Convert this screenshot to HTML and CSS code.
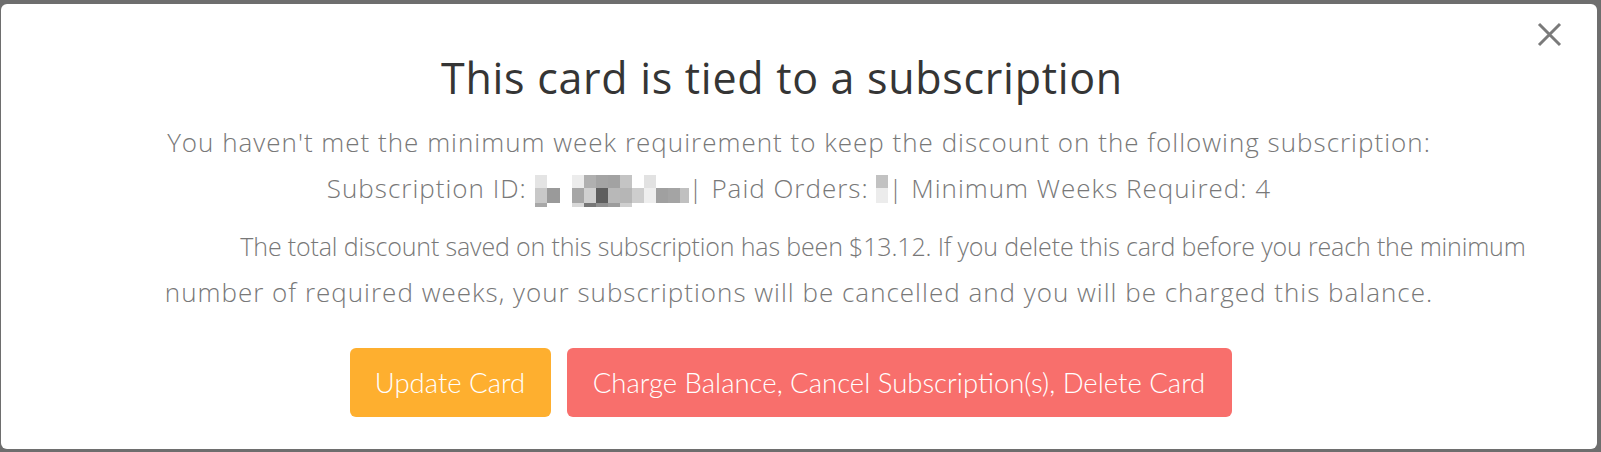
FILE: index.html
```html
<!DOCTYPE html>
<html lang="en">
<head>
<meta charset="utf-8">
<title>This card is tied to a subscription</title>
<link rel="stylesheet" href="styles.css">
</head>
<body>
<div class="backdrop">
  <div class="modal">
    <button class="close" aria-label="Close">
      <svg width="25" height="25" viewBox="0 0 25 25"><path d="M2 2 L23 23 M23 2 L2 23" stroke="#7a7a7a" stroke-width="3" fill="none"/></svg>
    </button>
    <h1 class="title">This card is tied to a subscription</h1>
    <p class="intro">You haven't met the minimum week requirement to keep the discount on the following subscription:<br>
      Subscription ID: <svg class="mosaic mosaic-id" width="154" height="32" viewBox="0 0 154 32"><rect x="0" y="0" width="12" height="13" fill="#e4e4e4"/><rect x="0" y="13" width="12" height="15" fill="#c8c8c8"/><rect x="0" y="28" width="12" height="4" fill="#a8a8a8"/><rect x="12" y="13" width="13" height="15" fill="#9a9a9a"/><rect x="37" y="0" width="12" height="13" fill="#ececec"/><rect x="37" y="13" width="12" height="15" fill="#a6a6a6"/><rect x="37" y="28" width="12" height="4" fill="#d8d8d8"/><rect x="49" y="0" width="12" height="13" fill="#b0b0b0"/><rect x="49" y="13" width="12" height="15" fill="#d0d0d0"/><rect x="49" y="28" width="12" height="4" fill="#777"/><rect x="61" y="0" width="12" height="13" fill="#a4a4a4"/><rect x="61" y="13" width="12" height="15" fill="#5e5e5e"/><rect x="61" y="28" width="12" height="4" fill="#909090"/><rect x="73" y="0" width="12" height="13" fill="#a2a2a2"/><rect x="73" y="13" width="12" height="15" fill="#b8b8b8"/><rect x="73" y="28" width="12" height="4" fill="#9c9c9c"/><rect x="85" y="0" width="12" height="13" fill="#c4c4c4"/><rect x="85" y="13" width="12" height="15" fill="#b6b6b6"/><rect x="85" y="28" width="12" height="4" fill="#cfcfcf"/><rect x="97" y="13" width="12" height="15" fill="#cdcdcd"/><rect x="109" y="0" width="12" height="13" fill="#e2e2e2"/><rect x="109" y="13" width="12" height="15" fill="#eeeeee"/><rect x="121" y="13" width="12" height="15" fill="#a0a0a0"/><rect x="133" y="13" width="12" height="15" fill="#a4a4a4"/><rect x="145" y="13" width="9" height="15" fill="#c0c0c0"/></svg>| Paid Orders: <svg class="mosaic mosaic-po" width="12" height="32" viewBox="0 0 12 32"><rect x="0" y="0" width="12" height="13" fill="#c2c2c2"/><rect x="0" y="13" width="12" height="15" fill="#ececec"/></svg>| Minimum Weeks Required: 4</p>
    <p class="detail"><span class="detail-lead">The total discount saved on this subscription has been $13.12. If you delete this card before you reach the minimum</span><br>number of required weeks, your subscriptions will be cancelled and you will be charged this balance.</p>
    <div class="actions">
      <button class="btn btn-update">Update Card</button>
      <button class="btn btn-delete">Charge Balance, Cancel Subscription(s), Delete Card</button>
    </div>
  </div>
</div>
</body>
</html>
```

FILE: styles.css
```css
* { box-sizing: border-box; }
html, body { margin: 0; padding: 0; }
body {
  background: #6e6e6e;
  font-family: "Open Sans", Lato, sans-serif;
  width: 1601px;
  height: 452px;
  overflow: hidden;
}
.backdrop {
  padding: 4px 4px 3px 1px;
  height: 452px;
}
.modal {
  position: relative;
  background: #fff;
  border-radius: 6px;
  height: 445px;
  display: flex;
  flex-direction: column;
  align-items: center;
  padding-top: 48px;
  text-align: center;
}
.close {
  position: absolute;
  top: 17px;
  right: 34px;
  width: 27px;
  height: 27px;
  padding: 1px;
  border: 0;
  background: none;
  cursor: pointer;
}
.close svg { display: block; }
.title {
  margin: 0 0 0 -34px;
  font-weight: 400;
  font-size: 43px;
  line-height: 52px;
  letter-spacing: 0.7px;
  color: #353535;
}
.intro, .detail {
  margin: 0;
  font-weight: 300;
  font-size: 26px;
  letter-spacing: 1px;
  line-height: 46px;
  color: #787878;
}
.intro { margin-top: 15px; }
.detail {
  margin-top: 12px;
  align-self: stretch;
  text-indent: 168px;
  white-space: nowrap;
}
.detail-lead {
  font-size: 25px;
  letter-spacing: -0.15px;
}
.mosaic { vertical-align: -9px; }
.actions {
  display: flex;
  gap: 16px;
  margin: 33px 0 0 -17px;
}
.btn {
  height: 69px;
  border: 0;
  border-radius: 6px;
  color: #fff;
  font-family: Lato, "Open Sans", sans-serif;
  font-weight: 300;
  font-size: 27.5px;
  padding: 0;
  cursor: pointer;
}
.btn-update { background: #feaf2f; width: 201px; }
.btn-delete { background: #f86f6c; width: 665px; }
```
